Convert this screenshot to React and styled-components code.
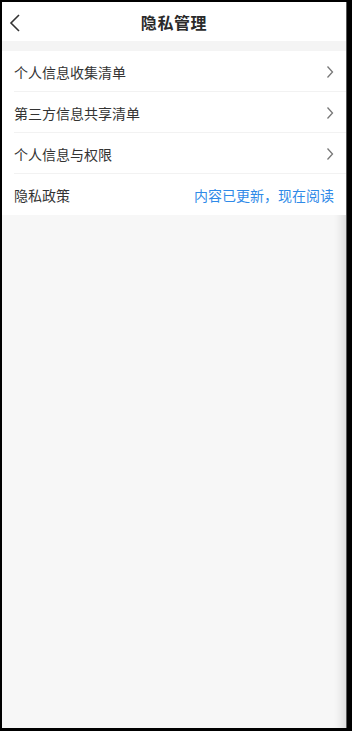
import React from 'react';
import styled, { createGlobalStyle } from 'styled-components';

const GlobalStyle = createGlobalStyle`
  html, body {
    margin: 0;
    padding: 0;
    background: #000;
  }
  * {
    box-sizing: border-box;
  }
`;

const Frame = styled.div`
  height: 731px;
  padding: 2px 5px 3px 2px;
  background: #000;
`;

const Screen = styled.div`
  height: 100%;
  display: flex;
  flex-direction: column;
  background: #f7f7f7;
  border-right: 1px solid #5a5a5a;
  box-shadow: inset -12px 0 10px -8px rgba(0, 0, 0, 0.12);
  font-family: "Noto Sans CJK SC", "Noto Sans", sans-serif;
  overflow: hidden;
`;

const NavBar = styled.div`
  height: 39px;
  display: flex;
  align-items: center;
  justify-content: center;
  position: relative;
  background: #fff;
`;

const BackButton = styled.div`
  position: absolute;
  left: 6px;
  top: 12px;
  width: 16px;
  height: 18px;
  display: flex;
`;

const Title = styled.div`
  font-size: 16px;
  font-weight: 700;
  color: #2a2a2a;
  letter-spacing: 0.6px;
`;

const Gap = styled.div`
  height: 10px;
  background: #f4f4f4;
`;

const List = styled.div`
  background: #fff;
  padding-left: 12px;
`;

const Row = styled.div`
  height: 41px;
  padding-top: 1px;
  display: flex;
  align-items: center;
  justify-content: space-between;
  padding-right: 12px;
  border-bottom: ${(p) => (p.last ? 'none' : '1px solid #f2f2f2')};
`;

const Label = styled.span`
  font-size: 14px;
  color: #333;
`;

const Hint = styled.span`
  font-size: 14px;
  color: #2f8ae8;
`;

const Back = () => (
  <svg width="16" height="18" viewBox="0 0 16 18">
    <polyline points="11,1 3,9 11,17" fill="none" stroke="#333" strokeWidth="1.6" />
  </svg>
);

const Chevron = () => (
  <svg width="8" height="14" viewBox="0 0 8 14">
    <polyline points="1.5,1.5 6.5,7 1.5,12.5" fill="none" stroke="#777" strokeWidth="1.3" />
  </svg>
);

const items = ['个人信息收集清单', '第三方信息共享清单', '个人信息与权限'];

export default function App() {
  return (
    <Frame>
      <GlobalStyle />
      <Screen>
        <NavBar>
          <BackButton>
            <Back />
          </BackButton>
          <Title>隐私管理</Title>
        </NavBar>
        <Gap />
        <List>
          {items.map((t) => (
            <Row key={t}>
              <Label>{t}</Label>
              <Chevron />
            </Row>
          ))}
          <Row last>
            <Label>隐私政策</Label>
            <Hint>内容已更新，现在阅读</Hint>
          </Row>
        </List>
      </Screen>
    </Frame>
  );
}
